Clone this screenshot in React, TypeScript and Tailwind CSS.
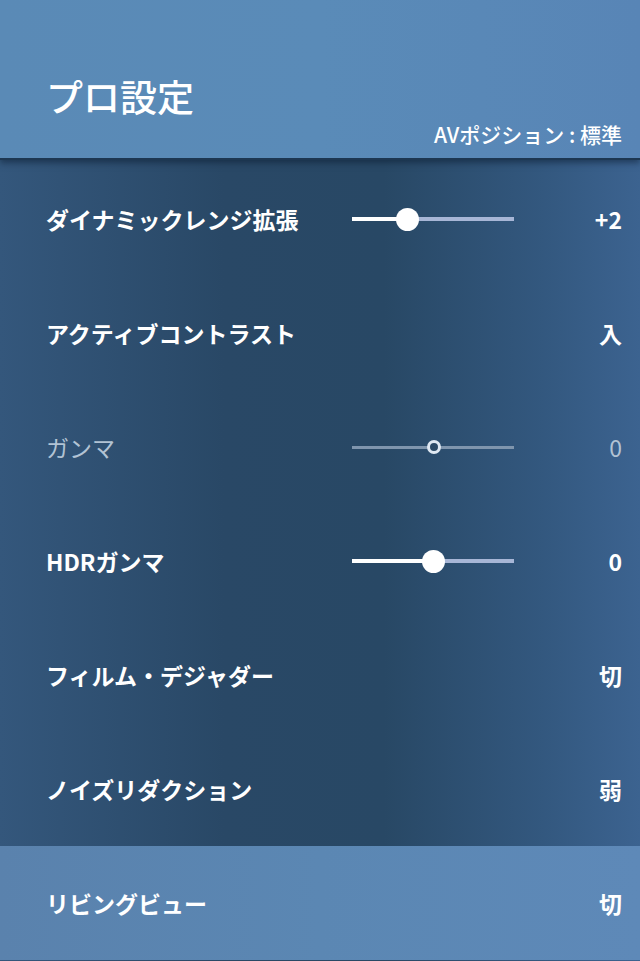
const font = "font-['Noto_Sans_CJK_JP','Noto_Sans',sans-serif]";

type Row = {
  label: string;
  value: string;
  slider?: number;
  disabled?: boolean;
  selected?: boolean;
};

const rows: Row[] = [
  { label: 'ダイナミックレンジ拡張', value: '+2', slider: 55 },
  { label: 'アクティブコントラスト', value: '入' },
  { label: 'ガンマ', value: '0', slider: 82, disabled: true },
  { label: 'HDRガンマ', value: '0', slider: 81 },
  { label: 'フィルム・デジャダー', value: '切' },
  { label: 'ノイズリダクション', value: '弱' },
  { label: 'リビングビュー', value: '切', selected: true },
];

// track is 162px wide; thumb overlaps the track by using negative margins
function Slider({ pos, disabled }: { pos: number; disabled?: boolean }) {
  if (disabled) {
    return (
      <div className="w-[162px] h-6 flex items-center">
        <div className="h-[3px] bg-[#7f95ad]" style={{ width: pos }} />
        <div className="shrink-0 w-[14px] h-[14px] -mx-[7px] z-10 rounded-full border-[3px] border-[#dfe8f2] bg-[#2b4a67]" />
        <div className="flex-1 h-[3px] bg-[#7f95ad]" />
      </div>
    );
  }
  return (
    <div className="w-[162px] h-6 flex items-center">
      <div className="h-[4px] bg-white" style={{ width: pos }} />
      <div className="shrink-0 w-[23px] h-[23px] -mx-[11.5px] z-10 rounded-full bg-white" />
      <div className="flex-1 h-[4px] bg-[#a7b6d6]" />
    </div>
  );
}

export default function App() {
  return (
    <div className={`${font} w-[640px] h-[961px] overflow-hidden bg-[linear-gradient(90deg,#34577c_0%,#294866_35%,#284865_60%,#33587f_85%,#3c6390_100%)] text-white`}>
      <header className="h-[160px] bg-[linear-gradient(90deg,#5a8ab6_0%,#5a8bb8_50%,#5885b6_100%)] border-b-2 border-[#1d3752] shadow-[0_3px_6px_rgba(10,25,45,0.5)] pl-[46px] pr-[18px] pt-[78px] flex flex-col">
        <h1 className="text-[37px] font-medium leading-none">プロ設定</h1>
        <p className="self-end mt-[9px] text-[21px] font-medium leading-none">AVポジション : 標準</p>
      </header>
      <div className="pt-[2px]">
        {rows.map((r) => (
          <div
            key={r.label}
            className={`h-[114px] flex items-center pl-[46px] pr-[18px] ${r.selected ? 'bg-[linear-gradient(90deg,#5a82ad_0%,#5b87b3_50%,#5e89b8_100%)]' : ''}`}
          >
            <span className={`flex-1 text-[23px] ${r.disabled ? 'font-normal text-[#b2c3d4]' : 'font-bold'}`}>
              {r.label}
            </span>
            {r.slider !== undefined && <Slider pos={r.slider} disabled={r.disabled} />}
            <span className={`w-[108px] text-right text-[23px] ${r.disabled ? 'font-normal text-[#b2c3d4]' : 'font-bold'}`}>
              {r.value}
            </span>
          </div>
        ))}
      </div>
    </div>
  );
}
